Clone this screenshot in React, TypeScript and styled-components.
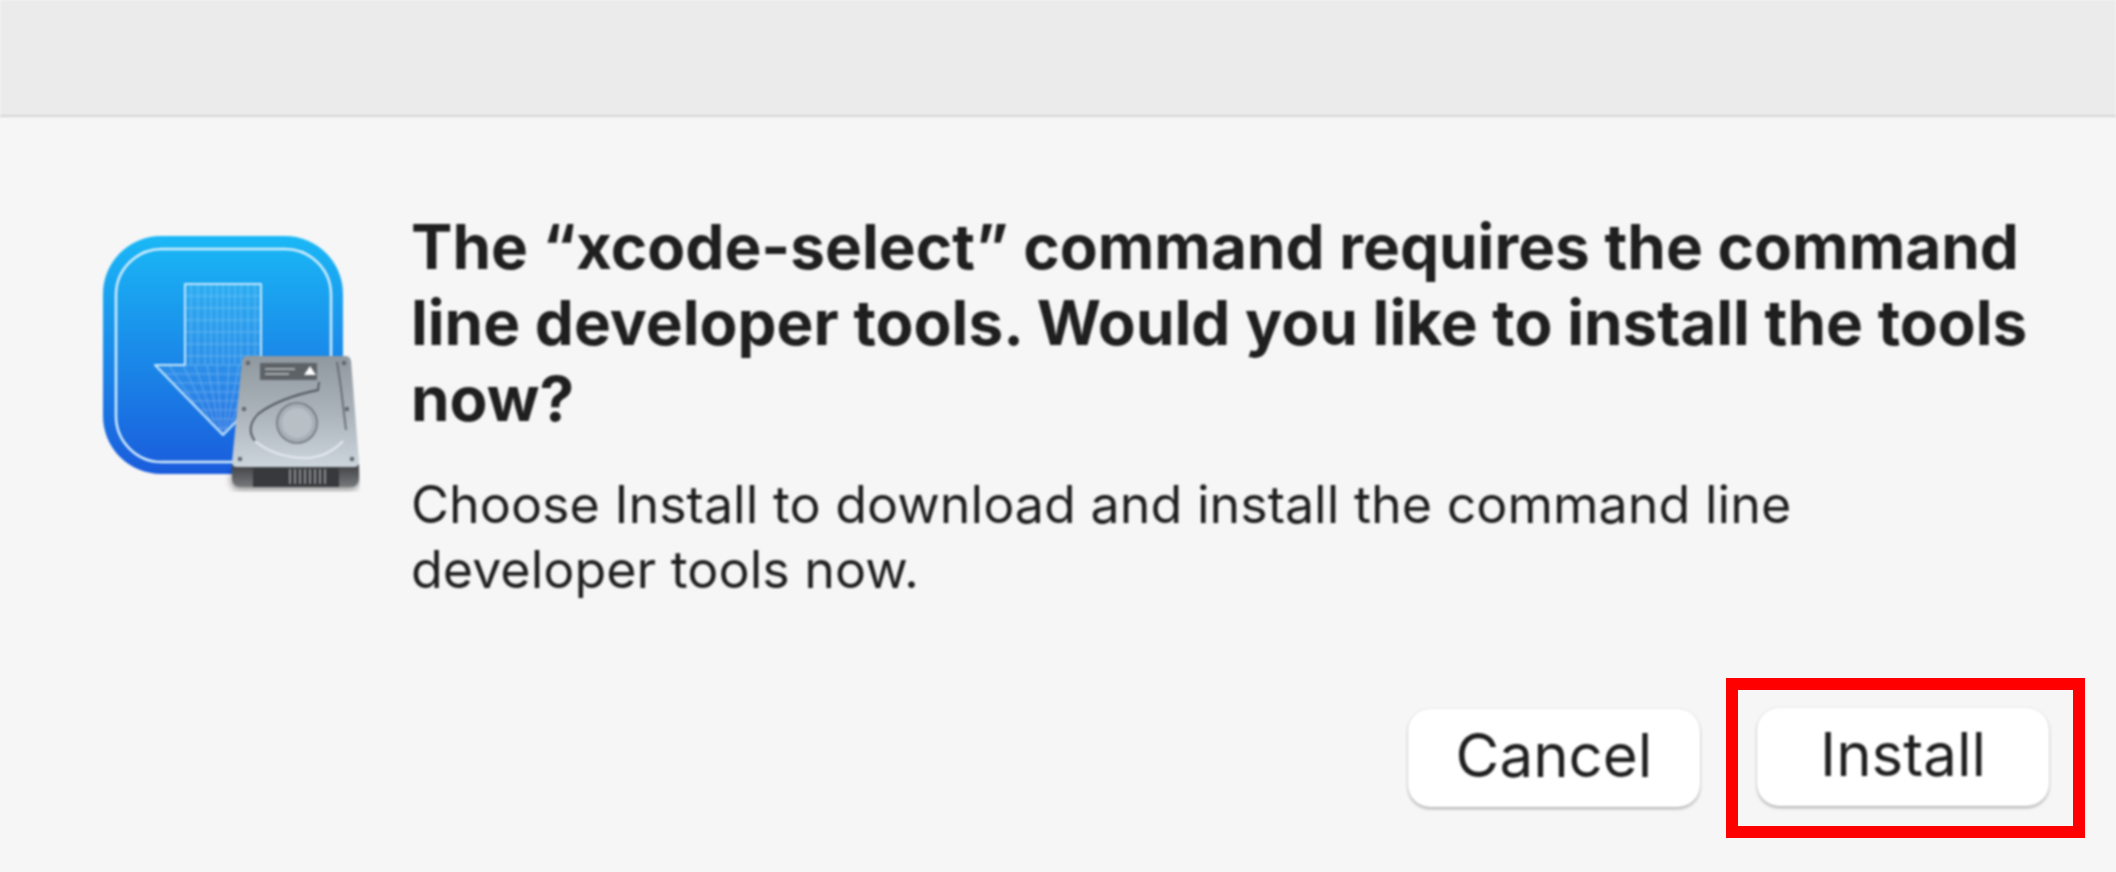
import React from "react";
import styled, { createGlobalStyle } from "styled-components";

const Global = createGlobalStyle`
  html, body { margin: 0; padding: 0; background: #f6f6f6; }
  #root { width: 2116px; height: 872px; overflow: hidden; }
`;

const Window = styled.div`
  width: 2116px;
  height: 872px;
  display: flex;
  flex-direction: column;
  background: #f6f6f6;
  color: #1f1f1f;
  font-family: Inter, "Liberation Sans", sans-serif;
`;

const TitleBar = styled.div`
  flex: none;
  height: 115px;
  background: #ebebeb;
  border-bottom: 2px solid #d4d4d4;
  filter: blur(0.9px);
`;

const Body = styled.div`
  flex: none;
  display: flex;
  align-items: flex-start;
  padding: 119px 0 0 103px;
  gap: 51px;
  height: 240px;
`;

const IconSlot = styled.svg`
  flex: none;
  display: block;
  width: 257px;
  height: 256px;
  filter: blur(0.9px);
`;

const Content = styled.div`
  flex: none;
  width: 1660px;
  margin-top: -27px;
  filter: blur(0.8px);
`;

const Heading = styled.h1`
  margin: 0 0 35px;
  font-size: 62px;
  line-height: 76px;
  font-weight: 700;
`;

const Message = styled.p`
  margin: 0;
  width: 1440px;
  font-size: 52px;
  line-height: 65px;
  font-weight: 400;
`;

const Footer = styled.div`
  margin-top: auto;
  display: flex;
  justify-content: flex-end;
  align-items: center;
  gap: 26px;
  padding: 0 31px 34px 0;
`;

const Button = styled.button`
  width: 292px;
  height: 98px;
  padding: 0 0 7px;
  border: none;
  border-radius: 22px;
  background: #ffffff;
  box-shadow: 0 2px 3px rgba(0, 0, 0, 0.28), 0 0 2px rgba(0, 0, 0, 0.14);
  color: #1f1f1f;
  font-family: inherit;
  font-size: 60px;
  font-weight: 400;
  filter: blur(0.8px);
`;

const Highlight = styled.div`
  display: flex;
  padding: 18px 24px 20px 19px;
  border: 12px solid #ff0000;
`;

function InstallerIcon() {
  return (
    <IconSlot viewBox="0 0 257 256">
      <defs>
        <linearGradient id="bg" x1="0" y1="0" x2="0" y2="1">
          <stop offset="0" stopColor="#1ab8f6" />
          <stop offset="1" stopColor="#1a5cdc" />
        </linearGradient>
        <linearGradient id="plate" x1="0" y1="0" x2="0" y2="1">
          <stop offset="0" stopColor="#8f979f" />
          <stop offset="0.55" stopColor="#aeb6bd" />
          <stop offset="1" stopColor="#ccd5dc" />
        </linearGradient>
        <linearGradient id="base" x1="0" y1="0" x2="0" y2="1">
          <stop offset="0" stopColor="#3d3f42" />
          <stop offset="1" stopColor="#77797c" />
        </linearGradient>
        <clipPath id="arrowClip">
          <path d="M82 48H158V129H188L120 199L52 129H82Z" />
        </clipPath>
        <filter id="soft" x="-20%" y="-20%" width="140%" height="140%">
          <feGaussianBlur stdDeviation="3" />
        </filter>
      </defs>
      <rect x="0" y="0" width="240" height="238" rx="58" fill="url(#bg)" />
      <rect x="13" y="13" width="215" height="213" rx="46" fill="none" stroke="#d6eefd" strokeWidth="2.5" />
      <g clipPath="url(#arrowClip)">
        <rect x="50" y="46" width="140" height="155" fill="#ffffff" opacity="0.08" />
        <g stroke="#ffffff" strokeWidth="1" opacity="0.28">
          {[88, 95, 102, 108, 114, 120, 126, 132, 138, 145, 152].map((x) => (
            <line key={x} x1={x} y1="48" x2={x} y2="129" />
          ))}
          {[60, 72, 84, 96, 108, 120, 129, 138, 147, 156, 165, 174, 183, 192].map((y) => (
            <line key={y} x1="50" y1={y} x2="190" y2={y} />
          ))}
          {[52, 66, 80, 92, 104, 114, 126, 136, 148, 160, 174, 188].map((x) => (
            <line key={x} x1={x} y1="129" x2={120 + (x - 120) * 0.15} y2="199" />
          ))}
        </g>
      </g>
      <path d="M82 48H158V129H188L120 199L52 129H82Z" fill="none" stroke="#c4e7fc" strokeWidth="2" strokeLinejoin="round" />
      <rect x="128" y="232" width="128" height="22" rx="8" fill="#000" opacity="0.4" filter="url(#soft)" />
      <path d="M129 228H256V242Q256 251 247 251H138Q129 251 129 242Z" fill="url(#base)" />
      <path d="M150 232H236V251H150Z" fill="#37393c" />
      <g stroke="#b4b6b8" strokeWidth="1.4">
        {[187, 192, 197, 202, 207, 212, 217, 222].map((x) => (
          <line key={x} x1={x} y1="233" x2={x} y2="248" />
        ))}
      </g>
      <path d="M144 120H242Q247 120 248 125L256 226Q256 231 251 231H134Q129 231 129 226L139 125Q140 120 144 120Z" fill="url(#plate)" />
      <rect x="157" y="127" width="57" height="17" rx="1" fill="#5d6267" />
      <rect x="162" y="132" width="30" height="2" fill="#aab0b5" />
      <rect x="162" y="137" width="24" height="2" fill="#aab0b5" />
      <path d="M201 139L207 130L213 139Z" fill="#ffffff" />
      <path d="M234 126L238 152L243 194" fill="none" stroke="#5c6268" strokeWidth="1.6" />
      <path d="M216 146L215 154Q176 162 155 178Q142 192 152 205" fill="none" stroke="#4f555b" strokeWidth="1.8" />
      <path d="M152 205Q172 222 205 222Q226 220 240 205" fill="none" stroke="#e4ebf0" strokeWidth="2" />
      <circle cx="194" cy="187" r="20" fill="#a8b0b7" stroke="#6e757b" strokeWidth="1.6" />
      <circle cx="194" cy="187" r="15" fill="#b8c0c6" />
      <g fill="#5f656b">
        <circle cx="145" cy="127" r="2.2" />
        <circle cx="241" cy="127" r="2.2" />
        <circle cx="141" cy="173" r="2.2" />
        <circle cx="244" cy="173" r="2.2" />
        <circle cx="137" cy="223" r="2.2" />
        <circle cx="249" cy="223" r="2.2" />
      </g>
    </IconSlot>
  );
}

export default function App() {
  return (
    <>
      <Global />
      <Window>
        <TitleBar />
        <Body>
          <InstallerIcon />
          <Content>
            <Heading>
              The “xcode-select” command requires the command line developer tools. Would you like to install the tools now?
            </Heading>
            <Message>
              Choose Install to download and install the command line developer tools now.
            </Message>
          </Content>
        </Body>
        <Footer>
          <Button>Cancel</Button>
          <Highlight>
            <Button>Install</Button>
          </Highlight>
        </Footer>
      </Window>
    </>
  );
}
